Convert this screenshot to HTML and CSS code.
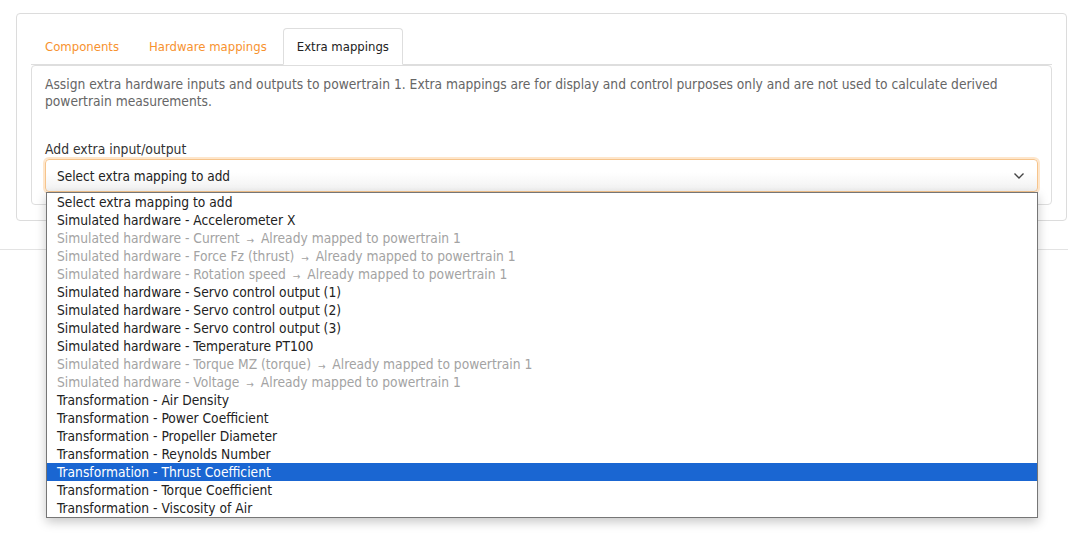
FILE: index.html
```html
<!DOCTYPE html>
<html>
<head>
<meta charset="utf-8">
<link rel="stylesheet" href="styles.css">
</head>
<body>
<div class="page">
  <div class="card">
    <ul class="tabs">
      <li class="tab"><a>Components</a></li>
      <li class="tab"><a>Hardware mappings</a></li>
      <li class="tab active"><a>Extra mappings</a></li>
    </ul>
    <div class="panel">
      <p class="desc">Assign extra hardware inputs and outputs to powertrain 1. Extra mappings are for display and control purposes only and are not used to calculate derived powertrain measurements.</p>
      <label class="label">Add extra input/output</label>
      <div class="select-wrap">
        <div class="select">
          <span>Select extra mapping to add</span>
          <svg class="chev" width="12" height="8" viewBox="0 0 12 8"><path d="M1.5 1.5 L6 6 L10.5 1.5" fill="none" stroke="#444" stroke-width="1.4"/></svg>
        </div>
        <ul class="dropdown">
          <li>Select extra mapping to add</li>
          <li>Simulated hardware - Accelerometer X</li>
          <li class="dis">Simulated hardware - Current <span class="arr">→</span> Already mapped to powertrain 1</li>
          <li class="dis">Simulated hardware - Force Fz (thrust) <span class="arr">→</span> Already mapped to powertrain 1</li>
          <li class="dis">Simulated hardware - Rotation speed <span class="arr">→</span> Already mapped to powertrain 1</li>
          <li>Simulated hardware - Servo control output (1)</li>
          <li>Simulated hardware - Servo control output (2)</li>
          <li>Simulated hardware - Servo control output (3)</li>
          <li>Simulated hardware - Temperature PT100</li>
          <li class="dis">Simulated hardware - Torque MZ (torque) <span class="arr">→</span> Already mapped to powertrain 1</li>
          <li class="dis">Simulated hardware - Voltage <span class="arr">→</span> Already mapped to powertrain 1</li>
          <li>Transformation - Air Density</li>
          <li>Transformation - Power Coefficient</li>
          <li>Transformation - Propeller Diameter</li>
          <li>Transformation - Reynolds Number</li>
          <li class="sel">Transformation - Thrust Coefficient</li>
          <li>Transformation - Torque Coefficient</li>
          <li>Transformation - Viscosity of Air</li>
        </ul>
      </div>
    </div>
  </div>
  <div class="rule"></div>
</div>
</body>
</html>
```
FILE: styles.css
```css
* { box-sizing: border-box; }
html, body { min-height: 560px; }
body {
  margin: 0;
  background: #fff;
  font-family: "DejaVu Sans", Verdana, sans-serif;
  font-stretch: condensed;
  font-size: 13px;
  color: #333;
}
.page { padding-top: 13px; min-height: 560px; }
.card {
  margin-left: 16px;
  margin-right: 1px;
  border: 1px solid #dcdcdc;
  border-radius: 4px;
  padding: 14px 14px 15px 14px;
}
.tabs {
  list-style: none;
  margin: 0;
  padding: 0;
  display: flex;
  border-bottom: 1px solid #dedede;
}
.tab { margin-bottom: -1px; margin-right: 2px; }
.tab a {
  display: block;
  padding: 9px 13px 8px;
  line-height: 18px;
  border: 1px solid transparent;
  border-radius: 4px 4px 0 0;
  color: #f7922f;
}
.tab.active a {
  color: #222;
  background: #fff;
  border-color: #dedede #dedede transparent;
}
.panel {
  margin-top: 0;
  border: 1px solid #dedede;
  border-radius: 4px;
  padding: 10px 13px 12px 13px;
}
.desc {
  margin: 0 0 31px;
  color: #666;
  font-size: 13.7px;
  line-height: 17px;
}
.label {
  display: block;
  font-size: 13.8px;
  line-height: 17px;
  margin-bottom: 1px;
  color: #333;
}
.select-wrap { position: relative; }
.select {
  height: 33px;
  border: 1px solid #f6c48c;
  border-radius: 4px;
  box-shadow: 0 0 0 2px rgba(252, 200, 140, 0.45);
  background: linear-gradient(#fff 40%, #f1f1f1);
  display: flex;
  align-items: center;
  justify-content: space-between;
  padding: 0 12px 0 11px;
  font-size: 13.5px;
  color: #222;
}
.chev { display: block; }
.dropdown {
  position: absolute;
  left: 1px;
  right: 0;
  top: 33px;
  margin: 0;
  padding: 0;
  list-style: none;
  background: #fff;
  border: 1px solid #767676;
  box-shadow: 0 4px 10px rgba(0, 0, 0, 0.22);
  z-index: 10;
}
.dropdown li {
  line-height: 18px;
  height: 18px;
  padding-left: 10px;
  font-size: 13.7px;
  color: #222;
  white-space: nowrap;
}
.dropdown li.dis { color: #a3a3a3; }
.dropdown li.sel { background: #1a66d2; color: #fff; }
.arr { font-size: 10px; margin: 0 3px; vertical-align: -1px; }
.rule {
  margin-top: 28px;
  border-top: 1px solid #e3e3e3;
}
```
